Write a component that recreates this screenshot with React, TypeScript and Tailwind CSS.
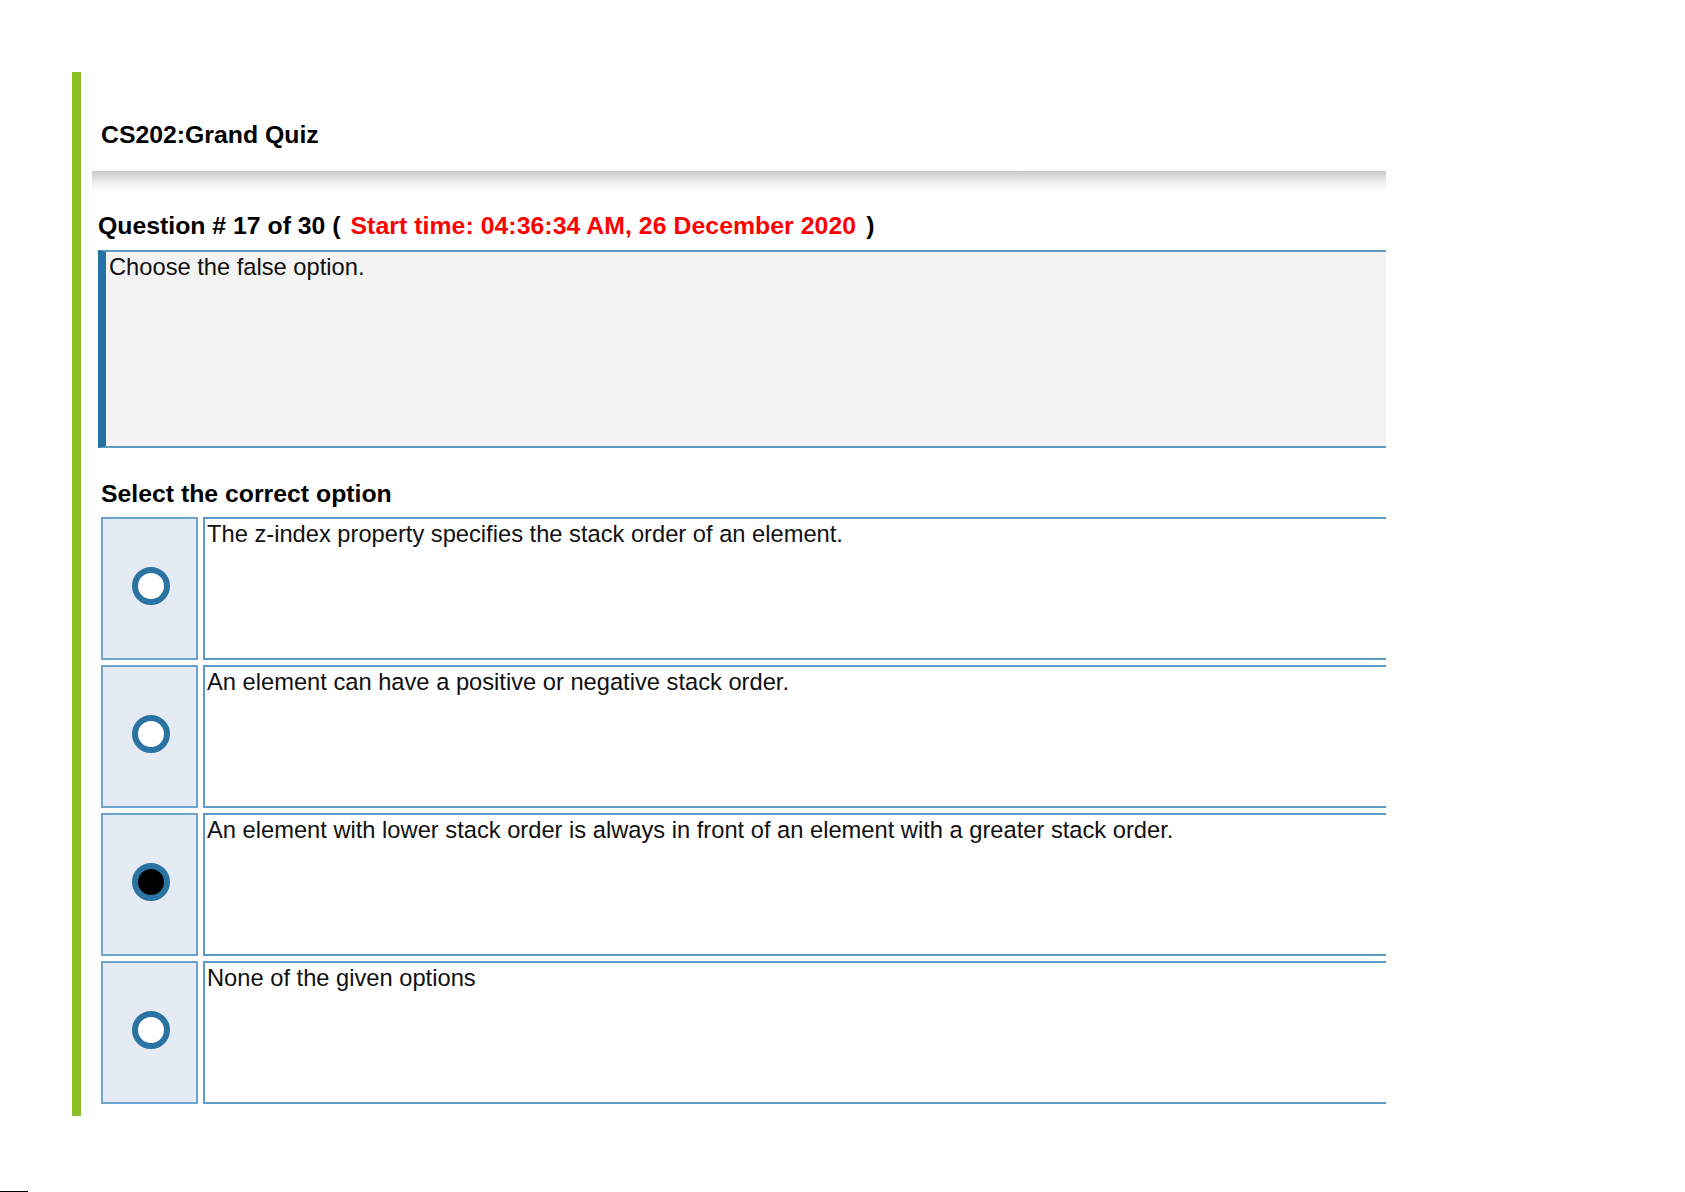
import React, { useState } from "react"

const options = [
  "The z-index property specifies the stack order of an element.",
  "An element can have a positive or negative stack order.",
  "An element with lower stack order is always in front of an element with a greater stack order.",
  "None of the given options",
]

const Radio: React.FC<{ checked: boolean; onClick: () => void }> = ({ checked, onClick }) => (
  <button
    onClick={onClick}
    className={
      "w-[38px] h-[38px] rounded-full border-[6px] border-[#2b74a1] " +
      (checked ? "bg-black" : "bg-white")
    }
  />
)

export default function App() {
  const [selected, setSelected] = useState<number>(2)

  return (
    <div
      className="min-h-[1192px] bg-white flex flex-col text-black"
      style={{ fontFamily: '"Liberation Sans", Arial, sans-serif' }}
    >
      <div className="pt-[72px] pl-[72px]">
        <div className="w-[1314px] h-[1044px] border-l-[9px] border-[#8cbf26] flex flex-col">
          <h1 className="ml-[20px] mt-[48px] text-[24.8px] font-bold leading-[29px]">CS202:Grand Quiz</h1>

          {/* shadow divider */}
          <div className="ml-[11px] mt-[22px] h-[21px] bg-gradient-to-b from-[#c9c9c9] via-[#ececec] to-white" />

          <div className="ml-[17px] mt-[19px] text-[24.8px] font-bold leading-[29px]">
            Question # 17 of 30 (
            <span className="ml-[10px] text-[#ff0000] tracking-[0.05px]">Start time: 04:36:34 AM, 26 December 2020</span>
            <span className="ml-[10px]">)</span>
          </div>

          <div className="ml-[17px] mt-[10px] h-[198px] bg-[#f3f3f3] border-y-2 border-[#5b9bc6] border-l-[8px] border-l-[#2471a3] pl-[3px] pt-[2px] text-[23.7px] leading-[27px] text-[#111]">
            Choose the false option.
          </div>

          <div className="ml-[20px] mt-[31px] text-[24.8px] font-bold leading-[29px]">Select the correct option</div>

          <div className="ml-[20px] mt-[9px] flex flex-col gap-[5px]">
            {options.map((text, i) => (
              <div key={i} className="flex gap-[5px] h-[143px]">
                <div className="w-[97px] shrink-0 bg-[#e5ebf5] border-2 border-[#6aa3cc] flex items-center justify-center pb-[6px] pl-[3px]">
                  <Radio checked={selected === i} onClick={() => setSelected(i)} />
                </div>
                <div className="flex-1 bg-white border-y-2 border-l-2 border-[#5b9bc6] pl-[2px] pt-[2px] text-[23.7px] leading-[27px] text-[#111]">
                  {text}
                </div>
              </div>
            ))}
          </div>
        </div>
      </div>
      <div className="mt-auto h-px w-[28px] bg-black" />
    </div>
  )
}
